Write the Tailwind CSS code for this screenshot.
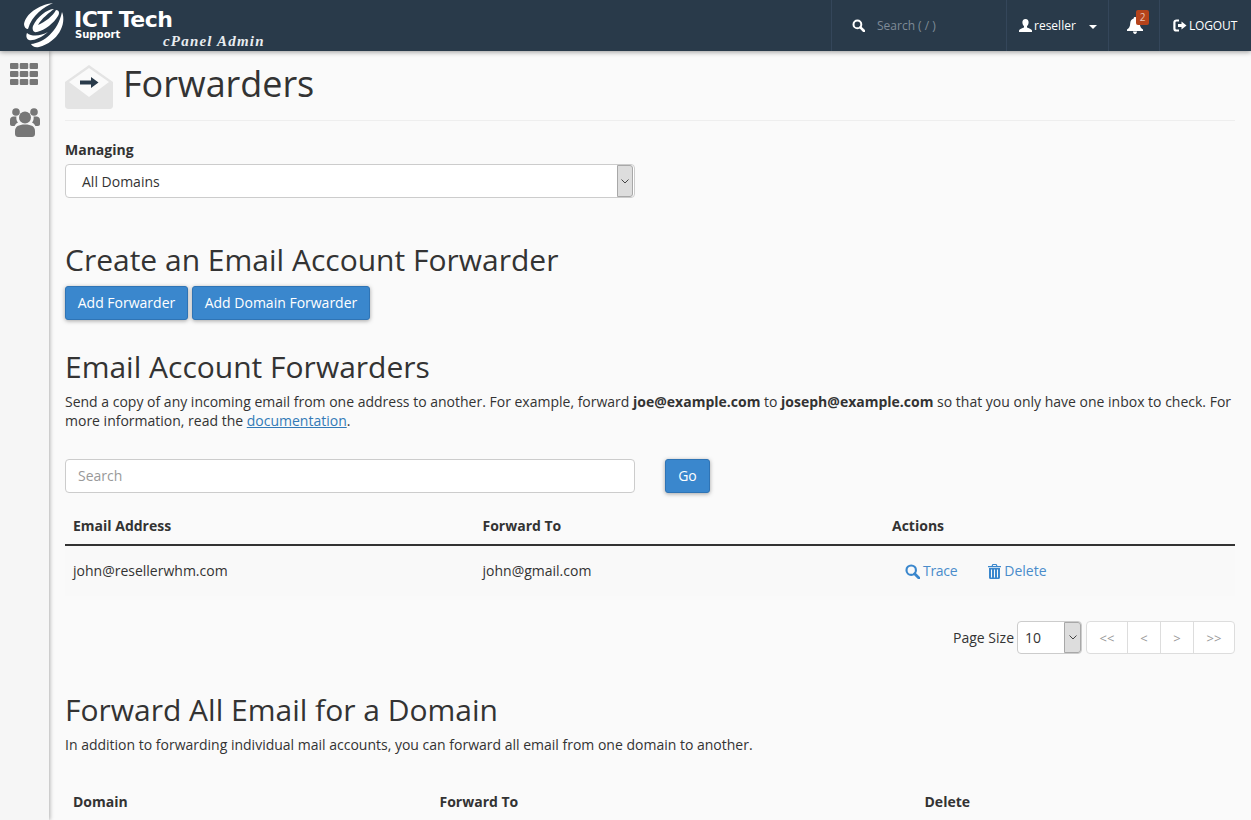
<!DOCTYPE html>
<html lang="en">
<head>
<meta charset="UTF-8">
<title>Forwarders</title>
<script src="https://cdn.jsdelivr.net/npm/@tailwindcss/browser@4"></script>
</head>
<body class="h-[820px] overflow-hidden bg-[#fafafa] font-['Open_Sans',sans-serif] text-[14px] leading-[20px] text-[#333333]">

<!-- top bar -->
<header class="relative z-20 flex h-[51px] items-stretch justify-between bg-[#293a4a] text-white shadow-[0_1px_5px_rgba(0,0,0,0.4)]">
  <div class="relative w-[300px]">
    <svg class="absolute left-[23px] top-[2px]" width="48" height="46" viewBox="0 0 48 46" fill="#fff">
      <path d="M1 22C3 12 15 3 30 1C21 5 9 13 5 27C3 27 1 25 1 22Z"/>
      <path d="M10 24C14 15 24 7 31 7C27 10 18 17 15 23C22 20 30 14 33 8C36 8 37 11 35 14C31 21 22 28 14 30C10 31 9 27 10 24Z"/>
      <path d="M39 10C44 22 35 40 16 45C12 46 9 44 8 42C21 41 35 29 39 10Z"/>
      <path d="M4 31C9 35 18 34 25 30C18 36 10 39 6 38C3 37 3 33 4 31Z"/>
    </svg>
    <span class="absolute left-[74px] top-[7px] font-['DejaVu_Sans',sans-serif] text-[22px] leading-[26px] font-bold tracking-[-0.55px] whitespace-nowrap">ICT Tech</span>
    <span class="absolute left-[75px] top-[28px] font-['DejaVu_Sans',sans-serif] text-[10px] leading-[14px] font-bold whitespace-nowrap">Support</span>
    <span class="absolute left-[163px] top-[33px] font-['Liberation_Serif',serif] text-[15px] leading-[16px] font-bold italic tracking-[1.2px] whitespace-nowrap text-[#e8ecef]">cPanel Admin</span>
  </div>
  <div class="mr-[1px] flex items-stretch text-[12px]">
    <div class="flex w-[175px] items-center border-l border-[#34465a] pl-[20px]">
      <svg width="13" height="13" viewBox="0 0 13 13" fill="none" stroke="#fff"><circle cx="5.4" cy="5.4" r="3.9" stroke-width="2"/><path d="M8.4 8.4L12 12" stroke-width="2.6" stroke-linecap="round"/></svg>
      <span class="ml-[12px] text-[#7f8b97]">Search ( / )</span>
    </div>
    <div class="flex w-[102px] items-center border-l border-[#34465a] pl-[12px]">
      <svg width="13" height="13" viewBox="0 0 13 13" fill="#fff"><path d="M6.5 0C8.6 0 9.8 1.6 9.6 3.8C9.5 5.4 8.8 6.6 8 7.2V8.4C9.6 9.2 12.6 9.8 13 11.4V13H0V11.4C.4 9.8 3.4 9.2 5 8.4V7.2C4.2 6.6 3.5 5.4 3.4 3.8C3.2 1.6 4.4 0 6.5 0Z"/></svg>
      <span class="ml-[2px]">reseller</span>
      <span class="ml-[13px] mt-[2px] border-x-[4px] border-t-[4px] border-x-transparent border-t-white"></span>
    </div>
    <div class="relative w-[51px] border-l border-[#34465a]">
      <svg class="absolute left-[18px] top-[17px]" width="16" height="17" viewBox="0 0 16 17" fill="#fff"><path d="M8 0C9 0 9.4.7 9.3 1.4C11.6 2 12.7 3.8 12.8 6.4C12.9 9.4 14 11 16 12.6V14H0V12.6C2 11 3.1 9.4 3.2 6.4C3.3 3.8 4.4 2 6.7 1.4C6.6.7 7 0 8 0Z"/><path d="M6 14.6H10C10 16 9 17 8 17C7 17 6 16 6 14.6Z"/></svg>
      <span class="absolute left-[27px] top-[10px] h-[15px] w-[13px] rounded-[2px] bg-[#b5431b] text-center text-[10px] leading-[15px] text-[#e9c4b4]">2</span>
    </div>
    <div class="flex w-[91px] items-center border-l border-[#34465a] pl-[13px]">
      <svg width="14" height="13" viewBox="0 0 14 13" fill="none" stroke="#fff"><path d="M6 1.5H3.5C2.2 1.5 1.4 2.3 1.4 3.6V9.4C1.4 10.7 2.2 11.5 3.5 11.5H6" stroke-width="2.2"/><path d="M5 5H8.5V2.5L13.5 6.5L8.5 10.5V8H5Z" fill="#fff" stroke="none"/></svg>
      <span class="ml-[2px] tracking-[-0.15px]">LOGOUT</span>
    </div>
  </div>
</header>

<div class="flex h-[769px] w-[1250px]">
  <!-- sidebar -->
  <aside class="z-10 flex w-[49px] shrink-0 flex-col items-start bg-[#f6f6f6] pl-[10px] pt-[12px] shadow-[1px_0_4px_rgba(0,0,0,0.3)]">
    <svg width="28" height="22" viewBox="0 0 28 22" fill="#777">
      <rect width="8.4" height="6" rx="1"/><rect x="9.8" width="8.4" height="6" rx="1"/><rect x="19.6" width="8.4" height="6" rx="1"/>
      <rect y="8" width="8.4" height="6" rx="1"/><rect x="9.8" y="8" width="8.4" height="6" rx="1"/><rect x="19.6" y="8" width="8.4" height="6" rx="1"/>
      <rect y="16" width="8.4" height="6" rx="1"/><rect x="9.8" y="16" width="8.4" height="6" rx="1"/><rect x="19.6" y="16" width="8.4" height="6" rx="1"/>
    </svg>
    <svg class="mt-[23px]" width="30" height="29" viewBox="0 0 30 29" fill="#777">
      <circle cx="6" cy="4" r="3.8"/><circle cx="24" cy="4" r="3.8"/>
      <path d="M0 12C0 10 1.5 8.5 3.5 8.5H6.5C6 10 6.4 13 8 14.5C6 15.4 5 17 4.6 18H2C.8 18 0 17.2 0 16Z"/>
      <path d="M30 12C30 10 28.5 8.5 26.5 8.5H23.5C24 10 23.6 13 22 14.5C24 15.4 25 17 25.4 18H28C29.2 18 30 17.2 30 16Z"/>
      <circle cx="15" cy="9.5" r="6"/>
      <path d="M5 23C5 18.5 8.5 16.4 15 16.4C21.5 16.4 25 18.5 25 23V26C25 28 23.6 29 22 29H8C6.4 29 5 28 5 26Z"/>
    </svg>
  </aside>

  <main class="min-w-0 flex-1 pl-[16px] pr-[15px]">
    <!-- page title -->
    <div class="flex h-[70px] items-start border-b border-[#eeeeee] pt-[14px]">
      <svg width="48" height="44" viewBox="0 0 48 44">
        <path d="M0 17L24 0L48 17V41C48 42.6 46.6 44 45 44H3C1.4 44 0 42.6 0 41Z" fill="#e4e4e4"/>
        <path d="M24 3L44 17L24 32L4 17Z" fill="#fafafa"/>
        <path d="M15 15.5H26V12L33.5 17.5L26 23V19.5H15Z" fill="#293a4a"/>
      </svg>
      <h1 class="ml-[10px] mt-[-1px] text-[36px] leading-[40px] font-normal tracking-[-0.05px]">Forwarders</h1>
    </div>

    <!-- managing -->
    <label class="mt-[19px] block font-bold">Managing</label>
    <div class="mt-[4px] flex h-[34px] w-[570px] items-center justify-between rounded-[4px] border border-[#cccccc] bg-white pl-[16px] pr-[1px]">
      <span class="mt-[1px]">All Domains</span>
      <span class="flex h-[32px] w-[16px] items-center justify-center rounded-r-[3px] border border-[#a8a8a8] bg-[#dddddd]">
        <svg width="8" height="5" viewBox="0 0 8 5" fill="none" stroke="#444"><path d="M.5.5L4 4L7.5.5"/></svg>
      </span>
    </div>

    <h2 class="mt-[44px] text-[30px] leading-[36px] font-normal">Create an Email Account Forwarder</h2>
    <div class="mt-[8px] flex gap-[4px]">
      <button class="h-[34px] w-[123px] rounded-[3px] border border-[#2f74b5] bg-[#3a87cd] text-white shadow-[0_1px_4px_rgba(0,0,0,0.35)]">Add Forwarder</button>
      <button class="h-[34px] w-[178px] rounded-[3px] border border-[#2f74b5] bg-[#3a87cd] text-white shadow-[0_1px_4px_rgba(0,0,0,0.35)]">Add Domain Forwarder</button>
    </div>

    <h2 class="mt-[29px] text-[30px] leading-[36px] font-normal">Email Account Forwarders</h2>
    <p class="mt-[7px] leading-[19px]">Send a copy of any incoming email from one address to another. For example, forward <b>joe@example.com</b> to <b>joseph@example.com</b> so that you only have one inbox to check. For more information, read the <a class="text-[#337ab7] underline">documentation</a>.</p>

    <div class="mt-[29px] flex">
      <div class="flex h-[34px] w-[570px] items-center rounded-[4px] border border-[#cccccc] bg-white pl-[12px] text-[#999999]">Search</div>
      <button class="ml-[30px] h-[34px] w-[45px] rounded-[3px] border border-[#2f74b5] bg-[#3a87cd] text-white shadow-[0_1px_4px_rgba(0,0,0,0.35)]">Go</button>
    </div>

    <!-- forwarders table -->
    <div class="mt-[15px] grid h-[38px] grid-cols-[409.5px_409.5px_1fr] items-center border-b-2 border-[#333333] pl-[8px] font-bold">
      <span>Email Address</span><span>Forward To</span><span>Actions</span>
    </div>
    <div class="grid h-[50px] grid-cols-[409.5px_409.5px_1fr] items-center bg-[#f9f9f9] pl-[8px]">
      <span>john@resellerwhm.com</span><span>john@gmail.com</span>
      <span class="flex items-center pl-[13px] text-[#4a8ccb]">
        <svg width="15" height="15" viewBox="0 0 14 14" fill="none" stroke="#3a87cd"><circle cx="5.8" cy="5.8" r="4.4" stroke-width="2"/><path d="M9 9L13 13" stroke-width="2.6" stroke-linecap="round"/></svg>
        <span class="ml-[3px] tracking-[-0.3px]">Trace</span>
        <svg class="ml-[31px]" width="13" height="15" viewBox="0 0 13 15" fill="#3a87cd"><path d="M4.5 0H8.5L9.5 2H13V3.2H0V2H3.5ZM5.2 1L4.8 2H8.2L7.8 1Z"/><path d="M1 4H12V13.5C12 14.4 11.4 15 10.5 15H2.5C1.6 15 1 14.4 1 13.5ZM3 5.5V13.5H4V5.5ZM6 5.5V13.5H7V5.5ZM9 5.5V13.5H10V5.5Z" fill-rule="evenodd"/></svg>
        <span class="ml-[3px]">Delete</span>
      </span>
    </div>

    <!-- pager -->
    <div class="mt-[25px] flex items-center justify-end">
      <span class="mt-[1px]">Page Size</span>
      <div class="ml-[3px] flex h-[33px] w-[65px] items-center justify-between rounded-[4px] border border-[#cccccc] bg-white pl-[7px]">
        <span>10</span>
        <span class="flex h-[31px] w-[17px] items-center justify-center rounded-r-[3px] border border-[#a8a8a8] bg-[#dddddd]">
          <svg width="8" height="5" viewBox="0 0 8 5" fill="none" stroke="#444"><path d="M.5.5L4 4L7.5.5"/></svg>
        </span>
      </div>
      <div class="ml-[4px] flex h-[33px] rounded-[4px] border border-[#dddddd] bg-white text-[13px] text-[#999999]">
        <span class="flex w-[40px] items-center justify-center">&lt;&lt;</span>
        <span class="flex w-[33px] items-center justify-center border-l border-[#dddddd]">&lt;</span>
        <span class="flex w-[33px] items-center justify-center border-l border-[#dddddd]">&gt;</span>
        <span class="flex w-[41px] items-center justify-center border-l border-[#dddddd]">&gt;&gt;</span>
      </div>
    </div>

    <h2 class="mt-[38px] text-[30px] leading-[36px] font-normal">Forward All Email for a Domain</h2>
    <p class="mt-[7px]">In addition to forwarding individual mail accounts, you can forward all email from one domain to another.</p>

    <div class="mt-[37px] grid grid-cols-[366.5px_485px_1fr] pl-[8px] font-bold">
      <span>Domain</span><span>Forward To</span><span>Delete</span>
    </div>
  </main>
</div>
</body>
</html>
